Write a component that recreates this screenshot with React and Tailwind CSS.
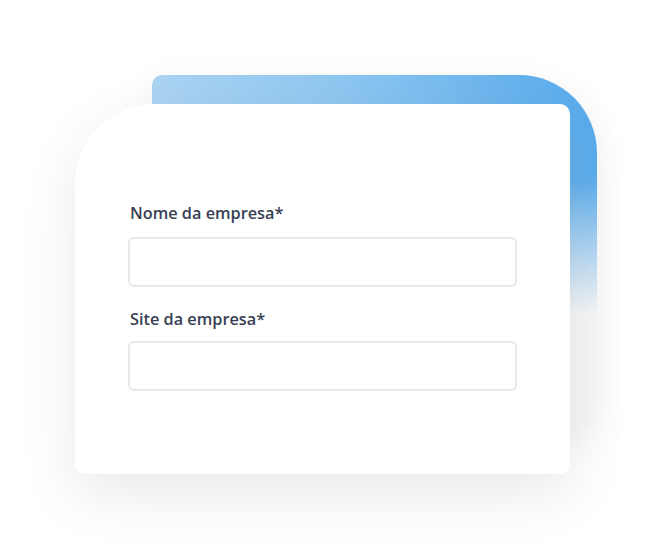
export default function App() {
  return (
    <div className="min-h-[550px] w-[672px] bg-white" style={{ fontFamily: '"Open Sans", "Noto Sans", sans-serif' }}>
      <div className="relative ml-[75px] pt-[104px]">
        {/* back card */}
        <div className="absolute left-[77px] top-[75px] h-[352px] w-[445px] rounded-tl-[10px] rounded-tr-[78px] rounded-br-[10px] bg-[linear-gradient(180deg,rgba(247,247,247,0)_30%,#f7f7f7_68%),linear-gradient(250deg,#55a9ec_0%,#8ec7f1_45%,#bfdcf4_100%)] shadow-[0_10px_40px_rgba(0,0,0,0.06)]" />

        {/* front card */}
        <div className="relative flex h-[370px] w-[495px] flex-col rounded-tl-[80px] rounded-tr-[10px] rounded-b-[10px] bg-white px-[53px] pt-[97px] shadow-[0_20px_60px_rgba(0,0,0,0.09)]">
          <label className="pl-[2px] text-[16.3px] font-semibold leading-[24px] text-[#383f54]">Nome da empresa*</label>
          <input className="mt-[12px] h-[50px] w-full rounded-[6px] border-2 border-[#e8e8e8] bg-white outline-none" />
          <label className="mt-[20px] pl-[2px] text-[16.3px] font-semibold leading-[24px] text-[#383f54]">Site da empresa*</label>
          <input className="mt-[10px] h-[50px] w-full rounded-[6px] border-2 border-[#e8e8e8] bg-white outline-none" />
        </div>
      </div>
    </div>
  );
}
